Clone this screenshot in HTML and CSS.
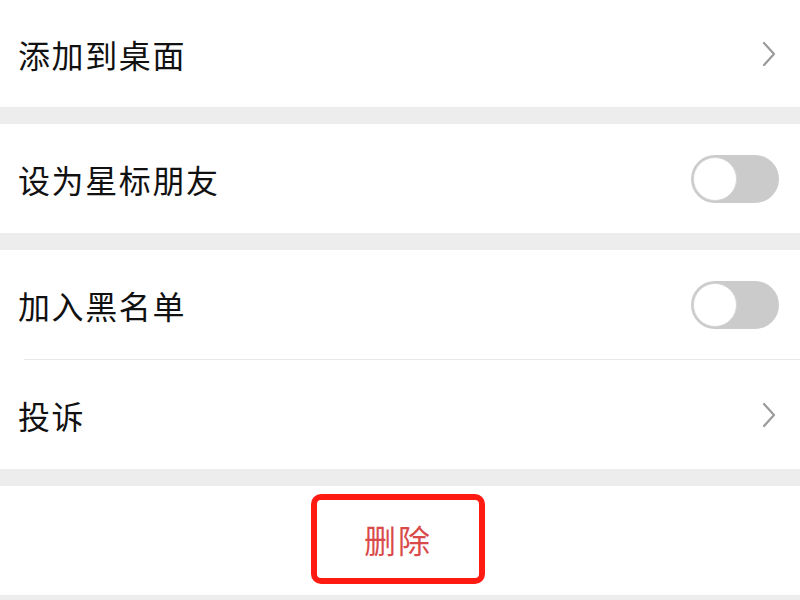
FILE: index.html
```html
<!DOCTYPE html>
<html lang="zh">
<head>
<meta charset="utf-8">
<link rel="stylesheet" href="styles.css">
</head>
<body>
<div class="page">
  <div class="group">
    <div class="row first">
      <span class="label">添加到桌面</span>
      <svg class="chevron" width="16" height="28" viewBox="0 0 16 28"><path d="M3 3 L13 14 L3 25" fill="none" stroke="#9a9a9a" stroke-width="2.2" stroke-linecap="round" stroke-linejoin="round"/></svg>
    </div>
  </div>
  <div class="group">
    <div class="row">
      <span class="label">设为星标朋友</span>
      <span class="toggle"><span class="knob"></span></span>
    </div>
  </div>
  <div class="group">
    <div class="row">
      <span class="label">加入黑名单</span>
      <span class="toggle"><span class="knob"></span></span>
    </div>
    <div class="divider"></div>
    <div class="row">
      <span class="label">投诉</span>
      <svg class="chevron" width="16" height="28" viewBox="0 0 16 28"><path d="M3 3 L13 14 L3 25" fill="none" stroke="#9a9a9a" stroke-width="2.2" stroke-linecap="round" stroke-linejoin="round"/></svg>
    </div>
  </div>
  <div class="group">
    <div class="row center">
      <span class="delete-box"><span class="delete">删除</span></span>
    </div>
  </div>
</div>
</body>
</html>
```

FILE: styles.css
```css
* { box-sizing: border-box; }
html, body { margin: 0; padding: 0; }
body {
  background: #ededed;
  font-family: "Noto Sans CJK SC", "Noto Sans", sans-serif;
  width: 800px;
  height: 600px;
  overflow: hidden;
}
.page {
  display: flex;
  flex-direction: column;
  gap: 17px;
}
.group {
  background: #fff;
  display: flex;
  flex-direction: column;
}
.row {
  height: 109px;
  display: flex;
  align-items: center;
  justify-content: space-between;
  padding: 0 22px 0 18px;
}
.row.first { height: 107px; }
.row.center { justify-content: center; padding: 0; }
.label {
  font-size: 32px;
  color: #111;
  letter-spacing: 1.6px;
  line-height: 1;
}
.chevron { display: block; margin-right: 1px; }
.divider {
  height: 1px;
  background: #e8e8e8;
  margin-left: 24px;
}
.toggle {
  width: 88px;
  height: 48px;
  border-radius: 24px;
  background: #cbcbcb;
  display: flex;
  align-items: center;
  padding: 2px;
  margin-right: -1px;
}
.knob {
  width: 44px;
  height: 44px;
  border-radius: 50%;
  background: #fff;
  border: 1px solid #d6d6d6;
}
.delete-box {
  width: 174px;
  height: 90px;
  border: 6px solid #ff1a12;
  border-radius: 10px;
  display: flex;
  align-items: center;
  justify-content: center;
  margin-top: -3px;
  margin-left: -4px;
}
.delete {
  font-size: 32px;
  color: #d94a4a;
  letter-spacing: 2px;
  line-height: 1;
}
```
